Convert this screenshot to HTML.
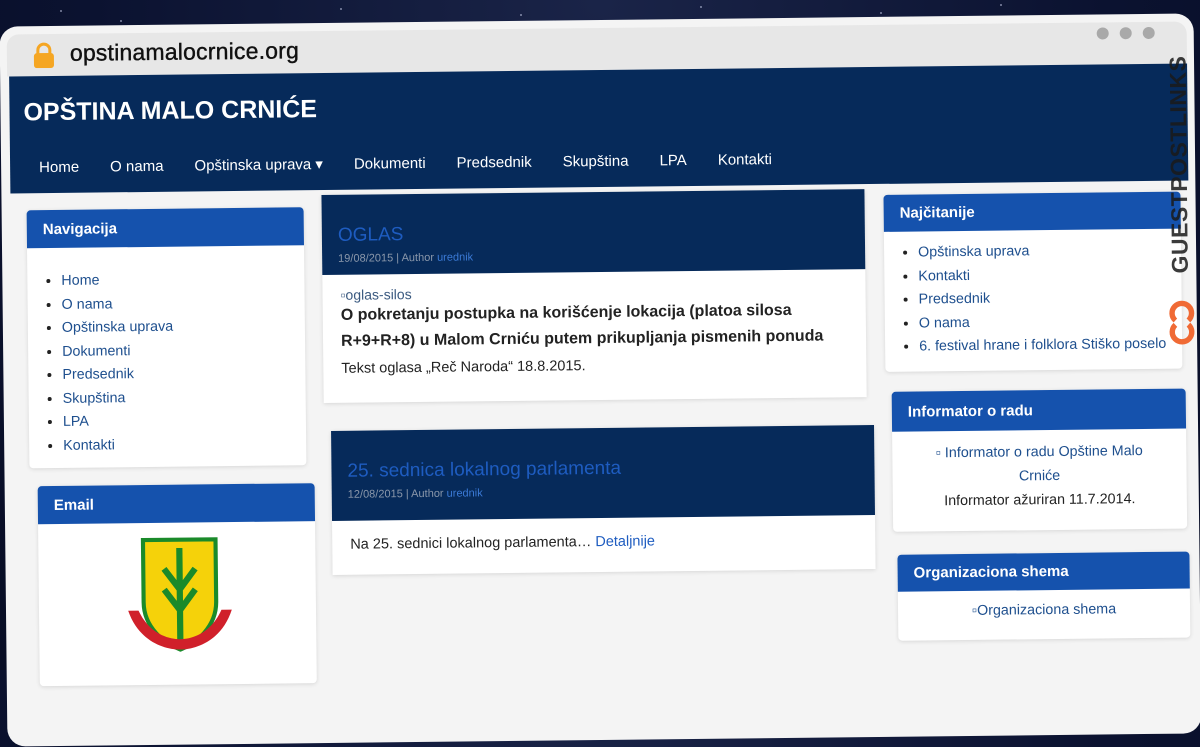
<!DOCTYPE html>
<html><head><meta charset="utf-8"><style>
*{margin:0;padding:0;box-sizing:border-box}
body{width:1200px;height:670px;overflow:hidden;background:radial-gradient(ellipse at 50% 0%,#1a2448 0%,#0b1230 60%,#080d24 100%);font-family:"Liberation Sans",sans-serif;position:relative}
.star{position:absolute;width:2px;height:2px;background:#cfd6f0;border-radius:50%;opacity:.6}
#w{position:absolute;left:0;top:0;width:1200px;height:670px;transform:rotate(-0.63deg);transform-origin:600px 335px}
.frame{position:absolute;left:3px;top:20px;width:1194px;height:720px;background:#f4f4f4;border-radius:18px;}
.bar{position:absolute;left:10px;top:28px;width:1180px;height:42px;background:#e7e7e7;border-radius:12px 12px 0 0}
.url{position:absolute;left:73px;top:34px;font-size:23px;color:#111;letter-spacing:.2px;-webkit-text-stroke:.4px #111}
.lock{position:absolute;left:36px;top:36px;width:22px;height:26px}
.dots{position:absolute;right:42px;top:32px}
.dots span{display:inline-block;width:12px;height:12px;border-radius:50%;background:#a9a9a9;margin-left:11px}
.hdr{position:absolute;left:12px;top:70px;width:1178px;height:117px;background:#062a5a}
.title{position:absolute;left:14px;top:22px;color:#fff;font-weight:bold;font-size:25px}
.nav{position:absolute;left:29px;top:82px;color:#fff;font-size:15px;white-space:nowrap}
.nav span{margin-right:31px}
.box{position:absolute;background:#fff;box-shadow:0 1px 4px rgba(0,0,0,.12);border-radius:4px}
.bh{background:#1552ad;color:#fff;font-weight:bold;font-size:15px;padding:0 16px;border-radius:4px 4px 0 0;display:flex;align-items:center}
ul{list-style:disc;padding-left:18px;color:#1e4f8e;font-size:14.3px;line-height:23.5px}
ul li::marker{color:#222}
.card{position:absolute;background:#fff;box-shadow:0 1px 4px rgba(0,0,0,.12)}
.ch{background:#062a5a;padding:0 16px}
.ct{color:#1e5cc0;font-size:19px;padding-top:30px}
.meta{color:#8a97aa;font-size:11px;margin-top:6px}
.meta a{color:#3b7ad6}
</style></head><body>
<div class="star" style="left:120px;top:20px"></div><div class="star" style="left:340px;top:8px"></div><div class="star" style="left:520px;top:14px"></div><div class="star" style="left:700px;top:6px"></div><div class="star" style="left:880px;top:12px"></div><div class="star" style="left:60px;top:10px"></div><div class="star" style="left:1000px;top:4px"></div><div class="star" style="left:240px;top:24px"></div>
<div id="w">
<div class="frame"></div>
<div class="bar"></div>
<svg class="lock" viewBox="0 0 22 26"><path d="M5 12V8a6 6 0 0 1 12 0v4" fill="none" stroke="#f5a623" stroke-width="3"/><rect x="1" y="11" width="20" height="15" rx="3" fill="#f5a623"/></svg>
<div class="url">opstinamalocrnice.org</div>
<div class="dots"><span></span><span></span><span></span></div>
<div class="hdr"><div class="title">OPŠTINA MALO CRNIĆE</div>
<div class="nav"><span>Home</span><span>O nama</span><span>Opštinska uprava ▾</span><span>Dokumenti</span><span>Predsednik</span><span>Skupština</span><span>LPA</span><span>Kontakti</span></div></div>

<div class="box" style="left:28px;top:204px;width:277px;height:258px"><div class="bh" style="height:38px">Navigacija</div>
<ul style="margin:22px 0 0 16px"><li>Home</li><li>O nama</li><li>Opštinska uprava</li><li>Dokumenti</li><li>Predsednik</li><li>Skupština</li><li>LPA</li><li>Kontakti</li></ul></div>
<div class="box" style="left:36px;top:480px;width:277px;height:200px"><div class="bh" style="height:38px">Email</div>
<svg style="position:absolute;left:84px;top:52px" width="114" height="116" viewBox="0 0 110 110"><path d="M20 2h70v60c0 25-20 40-35 46C40 102 20 87 20 62z" fill="#f5d20a" stroke="#1a8a2a" stroke-width="4"/><path d="M55 10v90M40 30l15 20 15-20M40 50l15 20 15-20" stroke="#1a8a2a" stroke-width="6" fill="none"/><path d="M5 70c10 30 35 38 50 38s40-8 50-38l-10 0c-10 22-28 28-40 28s-30-6-40-28z" fill="#d0202a"/></svg></div>

<div class="card" style="left:323px;top:192px;width:543px;height:208px"><div class="ch" style="height:80px"><div class="ct">OGLAS</div><div class="meta">19/08/2015 | Author <a>urednik</a></div></div>
<div style="padding:12px 18px;color:#222"><div style="color:#3b5a80;font-size:14px">▫oglas-silos</div>
<div style="font-weight:bold;font-size:16px;line-height:26px">O pokretanju postupka na korišćenje lokacija (platoa silosa R+9+R+8) u Malom Crniću putem prikupljanja pismenih ponuda</div>
<div style="font-size:14.5px;margin-top:6px">Tekst oglasa „Reč Naroda“ 18.8.2015.</div></div></div>

<div class="card" style="left:330px;top:428px;width:543px;height:144px"><div class="ch" style="height:90px"><div class="ct">25. sednica lokalnog parlamenta</div><div class="meta">12/08/2015 | Author <a>urednik</a></div></div>
<div style="padding:16px 18px;font-size:14.5px;color:#222">Na 25. sednici lokalnog parlamenta… <span style="color:#1e5cc0">Detaljnije</span></div></div>

<div class="box" style="left:885px;top:198px;width:297px;height:177px"><div class="bh" style="height:37px">Najčitanije</div>
<ul style="margin:10px 0 0 16px"><li>Opštinska uprava</li><li>Kontakti</li><li>Predsednik</li><li>O nama</li><li>6. festival hrane i folklora Stiško poselo</li></ul></div>
<div class="box" style="left:891px;top:395px;width:294px;height:140px"><div class="bh" style="height:40px">Informator o radu</div>
<div style="text-align:center;font-size:14.3px;line-height:24px;padding:10px 34px 0;color:#1e4f8e">▫ Informator o radu Opštine Malo Crniće<div style="color:#222;margin:0 -20px">Informator ažuriran 11.7.2014.</div></div></div>
<div class="box" style="left:895px;top:558px;width:292px;height:86px"><div class="bh" style="height:37px">Organizaciona shema</div>
<div style="text-align:center;font-size:14.3px;padding-top:12px;color:#1e4f8e">▫Organizaciona shema</div></div>

<div style="position:absolute;left:1164px;top:62px;width:36px;height:300px">
<div style="position:absolute;left:17px;top:0;transform:rotate(-90deg) translate(-100%,-50%);transform-origin:0 0;white-space:nowrap;font-weight:bold;font-size:23px;letter-spacing:.5px;color:#1a1a1a;opacity:.85">GUESTPOSTLINKS</div>
<svg style="position:absolute;left:5px;top:244px" width="26" height="46" viewBox="0 0 24 40"><path d="M6 18a9 9 0 1 1 12 0M18 22a9 9 0 1 1-12 0" fill="none" stroke="#f06a35" stroke-width="5"/></svg></div>
</div>
</body></html>
